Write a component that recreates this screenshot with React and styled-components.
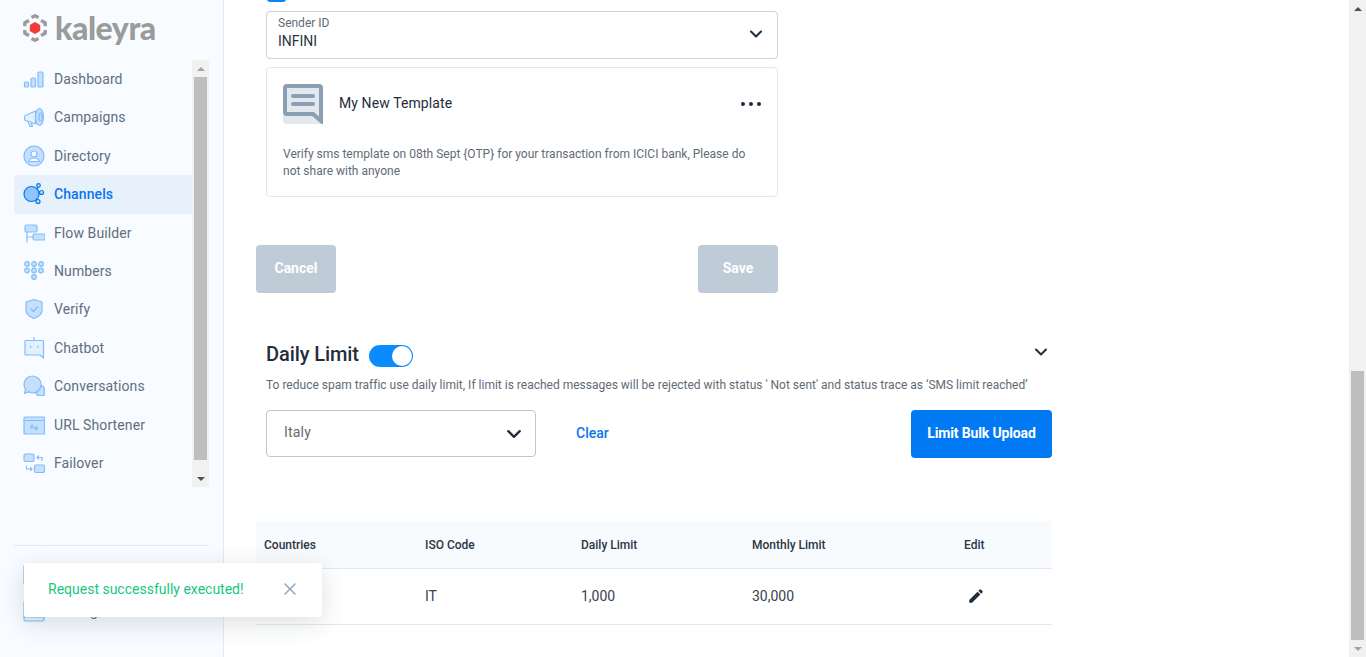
import React from 'react';
import styled, { createGlobalStyle } from 'styled-components';

const Global = createGlobalStyle`
  html, body { margin: 0; padding: 0; height: 100%; overflow: hidden; background: #fff; }
  body { font-family: Roboto, "Liberation Sans", sans-serif; color: #1f2d3d; }
  * { box-sizing: border-box; }
`;

const Page = styled.div`display: flex; height: 657px; width: 1366px; overflow: hidden; position: relative;`;
const Sidebar = styled.aside`
  width: 224px; flex: none; height: 100%; background: #f8fbff; border-right: 1px solid #e4e9ef;
  display: flex; flex-direction: column;
`;
const LogoRow = styled.div`height: 60px; flex: none; padding: 14px 0 0 22px; display: flex; align-items: flex-start; gap: 7px;`;
const LogoText = styled.span`font-size: 32px; line-height: 28px; font-weight: 900; color: #9b9b9b; letter-spacing: -0.45px; font-family: Lato, Roboto, sans-serif;`;
const NavWrap = styled.div`display: flex; height: 427px; flex: none; padding-left: 14px; width: 209px;`;
const Nav = styled.nav`flex: none; width: 178px;`;
const NavItem = styled.div`
  height: 38.45px; display: flex; align-items: center; padding-left: 9px; gap: 9px; font-size: 14px;
  border-radius: 3px 0 0 3px; position: relative; top: -0.45px;
  color: ${p => (p.$active ? '#0a76ee' : '#5f6f7f')};
  font-weight: ${p => (p.$active ? 500 : 400)};
  background: ${p => (p.$active ? '#e6f1fc' : 'transparent')};
  box-shadow: ${p => (p.$active ? '0 1px 0 #e6f1fc' : 'none')};
  letter-spacing: 0.1px;
`;
const IconBox = styled.span`width: 22px; height: 22px; flex: none; display: flex; align-items: center; justify-content: center;`;
const Track = styled.div`
  flex: none; width: 17px; background: #f1f1f1; display: flex; flex-direction: column; align-items: center; height: 100%;
`;
const Arrow = styled.div`
  flex: none; height: 17px; width: 100%; display: flex; align-items: center; justify-content: center;
  &::after {
    content: ''; width: 0; height: 0; border-left: 4px solid transparent; border-right: 4px solid transparent;
    ${p => (p.$up
      ? `border-bottom: 4px solid ${p.$color};`
      : `border-top: 4px solid ${p.$color};`)}
  }
`;
const Thumb = styled.div`
  width: 13px; background: #bebebe;
  flex: ${p => (p.$h ? 'none' : 1)};
  height: ${p => (p.$h ? `${p.$h}px` : 'auto')};
`;
const TrackGap = styled.div`width: 100%; flex: ${p => (p.$h ? 'none' : 1)}; height: ${p => p.$h || 0}px;`;
const Footer = styled.div`margin: 58px 0 0 14px; width: 195px; border-top: 1px solid #e4e9ef; padding: 18px 0 0 9px; display: flex; flex-direction: column; gap: 14px;`;
const FooterItem = styled.div`display: flex; align-items: center; gap: 9px; font-size: 14px; color: #5f6f7f; height: 22px;`;

const Main = styled.main`flex: 1; height: 100%; overflow: hidden; padding-left: 32px; min-width: 0;`;
const Form = styled.section`width: 522px;`;
const CheckTop = styled.div`
  width: 19px; height: 18px; margin: -16px 0 9px 11px; background: #0a84f5; border-radius: 3px;
`;
const Inset = styled.div`margin-left: 10px;`;
const SelectBox = styled.div`
  height: 48px; border: 1px solid #c9d2da; border-radius: 4px; padding: 4px 20px 0 11px; position: relative;
  display: flex; flex-direction: column; background: #fff;
`;
const SelectLabel = styled.span`font-size: 12px; line-height: 15px; color: #5f6b76;`;
const SelectValue = styled.span`font-size: 14px; line-height: 20px; margin-top: 0; color: #2a3642;`;
const ChevronSlot = styled.span`position: absolute; right: ${p => p.$right}px; top: ${p => p.$top}px; display: flex;`;
const Card = styled.div`
  margin-top: 8px; height: 130px; border: 1px solid #e3e8ed; border-radius: 4px; padding: 16px 16px 0;
`;
const CardHead = styled.div`display: flex; align-items: center; height: 40px;`;
const CardTitle = styled.span`margin-left: 16px; padding-bottom: 2px; font-size: 14px; color: #1f2d3d; flex: 1; letter-spacing: 0.1px;`;
const Dots = styled.span`display: flex; gap: 4px;`;
const Dot = styled.i`width: 4px; height: 4px; border-radius: 50%; background: #1f2d3d; display: block;`;
const CardBody = styled.p`margin: 22px 0 0; font-size: 12px; line-height: 17px; color: #5f6b76;`;
const Actions = styled.div`display: flex; justify-content: space-between; margin-top: 48px;`;
const GreyButton = styled.div`
  width: 80px; height: 48px; padding-bottom: 2px; background: #bfccd8; color: #fff; font-weight: 700; font-size: 14px; border-radius: 4px;
  display: flex; align-items: center; justify-content: center;
`;

const Limit = styled.section`width: 796px; margin-top: 52px;`;
const LimitHead = styled.div`display: flex; align-items: center; height: 22px; padding-left: 10px; position: relative;`;
const LimitTitle = styled.h2`margin: 0; padding-bottom: 4px; font-size: 20px; line-height: 22px; font-weight: 500; color: #1f2d3d; letter-spacing: -0.1px;`;
const Toggle = styled.span`
  margin-left: 10px; width: 44px; height: 22px; border-radius: 11px; background: #0a8cff; display: flex; align-items: center; justify-content: flex-end; padding-right: 1px;
`;
const Knob = styled.i`width: 20px; height: 20px; border-radius: 50%; background: #fff; display: block;`;
const Help = styled.p`margin: 11px 0 0 10px; font-size: 12px; line-height: 14px; color: #5f6b76; white-space: nowrap; letter-spacing: 0.004px;`;
const FilterRow = styled.div`display: flex; align-items: flex-start; margin-top: 18px; padding-left: 10px;`;
const CountrySelect = styled.div`
  width: 270px; height: 47px; border: 1px solid #bcc7d1; border-radius: 4px; padding: 12px 0 0 17px;
  font-size: 14px; line-height: 18px; color: #5f6b76; position: relative; letter-spacing: 0.2px;
`;
const ClearLink = styled.span`margin: 15px 0 0 40px; font-size: 14px; line-height: 17px; font-weight: 500; color: #0a76ee; flex: 1;`;
const PrimaryButton = styled.div`
  width: 141px; height: 48px; padding-bottom: 2px; background: #0079f2; color: #fff; font-size: 14px; font-weight: 700; border-radius: 4px;
  display: flex; align-items: center; justify-content: center; letter-spacing: -0.15px;
`;
const Table = styled.div`margin-top: 63px;`;
const Row = styled.div`
  display: grid; grid-template-columns: 161px 156px 171px 212px 96px; align-items: center;
  height: ${p => p.$h}px; border-bottom: 1px solid #e4e8ec;
  padding-bottom: ${p => (p.$head ? 0 : 2)}px;
  background: ${p => (p.$head ? '#f8fbfd' : '#fff')};
  font-size: ${p => (p.$head ? 12 : 14)}px;
  font-weight: ${p => (p.$head ? 500 : 400)};
  color: ${p => (p.$head ? '#2a3642' : '#36424e')};
`;
const Cell = styled.div`padding-left: ${p => p.$pad || 8}px; display: flex; align-items: center;`;
const PageBar = styled.div`
  width: 17px; height: 100%; flex: none; background: #f1f1f1; display: flex; flex-direction: column; align-items: center;
`;
const Toast = styled.div`
  position: absolute; left: 24px; top: 563px; width: 298px; height: 54px; background: #fff; border-radius: 2px;
  box-shadow: 0 6px 24px rgba(40, 60, 80, 0.16); display: flex; align-items: center; justify-content: space-between;
  padding: 0 26px 2px 24px; font-size: 14px; color: #17c77f;
`;

const c1 = '#82bdfa', c2 = '#c4e0fd';

const I = ({ children }) => (
  <svg width="22" height="22" viewBox="0 0 22 22" fill="none" stroke={c1} strokeWidth="1.2" strokeLinejoin="round" strokeLinecap="round">{children}</svg>
);

const numberDots = [[4, 4], [11, 4], [18, 4], [4, 10.5], [11, 10.5], [18, 10.5], [11, 17]];

const icons = {
  Dashboard: <I><rect x="1.5" y="14" width="4" height="5" rx="1" fill={c2} /><rect x="8" y="10" width="4.5" height="9" rx="1" fill={c2} /><rect x="15" y="4" width="5" height="15" rx="1" fill={c2} /></I>,
  Campaigns: <I><path d="M1.5 12a2.500 2.500 0 0 1 2-3l9-4v13l-8-3h-1a2.500 2.500 0 0 1-2-3z" fill="#e3f0fe" /><path d="M5 15.500l2 5h2.500l-1.500-4.500" fill="#e3f0fe" /><ellipse cx="16.500" cy="11" rx="4" ry="8.500" fill={c2} /><ellipse cx="17.500" cy="11" rx="1.500" ry="4" /></I>,
  Directory: <I><circle cx="11" cy="11" r="10" fill={c2} /><circle cx="11" cy="9" r="3" fill="#f8fbff" /><path d="M5.500 16.500c1-3 3-3.500 5.500-3.500s4.500.5 5.500 3.500z" fill="#f8fbff" /></I>,
  Channels: <svg width="22" height="22" viewBox="0 0 22 22" fill="none" stroke="#0a76ee" strokeWidth="1.2"><circle cx="8.500" cy="11" r="7.500" fill="#8fc5fb" /><circle cx="15.500" cy="2.500" r="1.800" fill="#bcdcfc" /><circle cx="18.500" cy="9.500" r="2" fill="#bcdcfc" /><circle cx="15" cy="18.500" r="2" fill="#bcdcfc" /><path d="M14 7l1-3M15.500 10l1-.2M13 15.500l1 1.300" /></svg>,
  'Flow Builder': <I><rect x="2" y="3" width="12" height="7" rx="1.500" fill={c2} /><rect x="10" y="12" width="12" height="6" rx="1.500" fill={c2} /><path d="M4 10v10M4 15h6" /></I>,
  Numbers: <I>{numberDots.map(([x, y]) => <circle key={x + '-' + y} cx={x} cy={y} r="2.300" fill={c2} />)}</I>,
  Verify: <I><path d="M11 1.500l8 2.500v8c0 4.500-4 7-8 8.500-4-1.500-8-4-8-8.500V4z" fill={c2} /><path d="M8 11l2.500 2.500L14.500 9" /></I>,
  Chatbot: <I><path d="M2 4.500a1 1 0 0 1 1-1h16.500a1 1 0 0 1 1 1V21l-3.500-3H3a1 1 0 0 1-1-1z" fill="#e3f0fe" /><path d="M11 3.500V0" /><path d="M7.500 9v1.500M15 9v1.500" /></I>,
  Conversations: <I><path d="M21 20.500h-6l-2-2 6-8c2 1 2.500 3 2.500 5z" fill={c2} /><circle cx="9.500" cy="9.500" r="8.500" fill={c2} /><path d="M2.500 14.500l-1 4 5-2" fill={c2} /></I>,
  'URL Shortener': <I><rect x="1" y="3" width="20.500" height="17" rx="1" fill={c2} /><path d="M1 6.500h20.500" /><path d="M9.500 11l-2 2 1.500 1.500M12.500 16l2-2-1.500-1.500M9.500 12.500l3 2" /></I>,
  Failover: <I><rect x="1" y="2" width="10" height="7.500" rx="1.500" fill={c2} /><rect x="11.500" y="13" width="10" height="7.500" rx="1.500" fill={c2} /><path d="M14 5.500h5v3M14 5.500l1.500-1.500M14 5.500l1.500 1.500M9 17H3.500v-3M9 17l-1.500-1.500M9 17l-1.500 1.500" /></I>,
  FooterBox: <I><rect x="1" y="1" width="20" height="20" rx="1.500" fill="#e3f0fe" /><path d="M1 17h20" /></I>,
};

const names = ['Dashboard', 'Campaigns', 'Directory', 'Channels', 'Flow Builder', 'Numbers', 'Verify', 'Chatbot', 'Conversations', 'URL Shortener', 'Failover'];

const templateText = 'Verify sms template on 08th Sept {OTP} for your transaction from ICICI bank, Please do not share with anyone';

const Chevron = ({ size = 14, sw = 2 }) => (
  <svg width={size} height={size} viewBox="0 0 14 14" fill="none" stroke="#1f2d3d" strokeWidth={sw} strokeLinecap="round" strokeLinejoin="round"><path d="M2 4.500l5 5 5-5" /></svg>
);

const Logo = () => (
  <svg width="26" height="28" viewBox="0 0 26 28" fill="none" stroke="#9b9b9b" strokeWidth="3.400" strokeLinejoin="round">
    <path d="M9.500 3.600L13 1.800l3.500 1.800" />
    <path d="M7 6.500L2.800 8.800v3.400" />
    <path d="M19 6.500l4.200 2.300v3.400" />
    <path d="M2.800 16v3.200L7 21.500" />
    <path d="M23.200 16v3.200L19 21.500" />
    <path d="M9.500 24.400l3.500 1.800 3.500-1.800" />
    <path d="M13 8l5.200 3v6L13 20l-5.200-3v-6z" fill="#f63a3a" stroke="none" />
  </svg>
);

const TemplateIcon = () => (
  <svg width="40" height="40" viewBox="0 0 40 40" fill="none">
    <path d="M0 28h30l10 12H4a4 4 0 0 1-4-4z" fill="#e3e8ed" />
    <path d="M4 2h32a2 2 0 0 1 2 2v33l-8-7H4a2 2 0 0 1-2-2V4a2 2 0 0 1 2-2z" fill="#e3e8ed" stroke="#8a9fb3" strokeWidth="4" />
    <rect x="8" y="10" width="24" height="4" rx="2" fill="#8a9fb3" />
    <rect x="8" y="18" width="24" height="4" rx="2" fill="#8a9fb3" />
  </svg>
);

const Pencil = () => (
  <svg width="18" height="18" viewBox="0 0 24 24" fill="#1f2d3d"><path d="M3 17.250V21h3.750L17.810 9.940l-3.750-3.750L3 17.250zM20.710 7.040a1 1 0 0 0 0-1.410l-2.340-2.340a1 1 0 0 0-1.410 0l-1.830 1.830 3.750 3.750 1.830-1.830z" /></svg>
);

const Close = () => (
  <svg width="12" height="12" viewBox="0 0 12 12" stroke="#94a5b5" strokeWidth="1.500" strokeLinecap="round"><path d="M1 1l10 10M11 1L1 11" /></svg>
);

export default function App() {
  return (
    <Page>
      <Global />
      <Sidebar>
        <LogoRow><Logo /><LogoText>kaleyra</LogoText></LogoRow>
        <NavWrap>
          <Nav>
            {names.map(n => (
              <NavItem key={n} $active={n === 'Channels'}>
                <IconBox>{icons[n]}</IconBox>{n}
              </NavItem>
            ))}
          </Nav>
          <Track>
            <Arrow $up $color="#a3a3a3" />
            <Thumb />
            <TrackGap $h={10} />
            <Arrow $color="#505050" />
          </Track>
        </NavWrap>
        <Footer>
          <FooterItem><IconBox>{icons.FooterBox}</IconBox></FooterItem>
          <FooterItem><IconBox>{icons.FooterBox}</IconBox>Settings</FooterItem>
        </Footer>
      </Sidebar>

      <Main>
        <Form>
          <CheckTop />
          <Inset>
            <SelectBox>
              <SelectLabel>Sender ID</SelectLabel>
              <SelectValue>INFINI</SelectValue>
              <ChevronSlot $right={14} $top={15}><Chevron /></ChevronSlot>
            </SelectBox>
            <Card>
              <CardHead>
                <TemplateIcon />
                <CardTitle>My New Template</CardTitle>
                <Dots><Dot /><Dot /><Dot /></Dots>
              </CardHead>
              <CardBody>{templateText}</CardBody>
            </Card>
          </Inset>
          <Actions>
            <GreyButton>Cancel</GreyButton>
            <GreyButton>Save</GreyButton>
          </Actions>
        </Form>

        <Limit>
          <LimitHead>
            <LimitTitle>Daily Limit</LimitTitle>
            <Toggle><Knob /></Toggle>
            <ChevronSlot $right={4} $top={0}><Chevron size={14} /></ChevronSlot>
          </LimitHead>
          <Help>To reduce spam traffic use daily limit, If limit is reached messages will be rejected with status ' Not sent' and status trace as ‘SMS limit reached’</Help>
          <FilterRow>
            <CountrySelect>
              Italy
              <ChevronSlot $right={13} $top={15}><Chevron size={16} /></ChevronSlot>
            </CountrySelect>
            <ClearLink>Clear</ClearLink>
            <PrimaryButton>Limit Bulk Upload</PrimaryButton>
          </FilterRow>
          <Table>
            <Row $head $h={48}>
              <Cell>Countries</Cell><Cell>ISO Code</Cell><Cell>Daily Limit</Cell><Cell>Monthly Limit</Cell><Cell>Edit</Cell>
            </Row>
            <Row $h={56}>
              <Cell>Italy</Cell><Cell>IT</Cell><Cell>1,000</Cell><Cell>30,000</Cell><Cell $pad={11}><Pencil /></Cell>
            </Row>
          </Table>
        </Limit>
      </Main>

      <PageBar>
        <Arrow $up $color="#505050" />
        <TrackGap />
        <Thumb $h={269} />
        <Arrow $color="#a3a3a3" />
      </PageBar>

      <Toast>
        Request successfully executed!
        <Close />
      </Toast>
    </Page>
  );
}
